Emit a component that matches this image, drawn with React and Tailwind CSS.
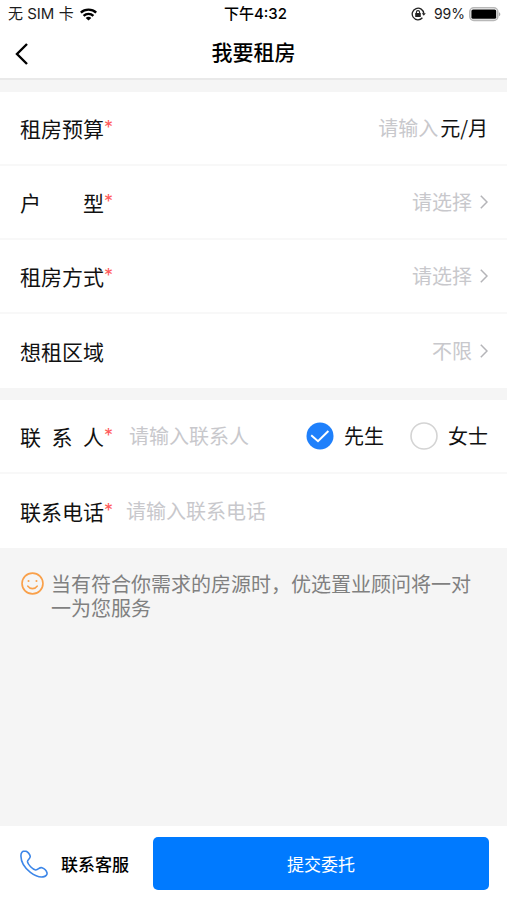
import React, { useState } from 'react';

const StatusBar = () => (
  <div className="relative flex h-7 items-center justify-between pr-1.5 pl-2 font-[Inter,'Noto_Sans_CJK_SC',sans-serif] text-[15px] leading-5 text-[#1c1c1c]">
    <div className="flex items-center gap-1.5">
      <span>无 SIM 卡</span>
      <svg width="17" height="13" viewBox="0 0 17 13" fill="none" stroke="#000" strokeWidth="2.4">
        <path d="M0.8 4.6C5 0.6 12 0.6 16.2 4.6" />
        <path d="M3.6 7.8C6.3 5.2 10.7 5.2 13.4 7.8" />
        <path d="M8.5 12.4L5.7 9.9C7.2 8.5 9.8 8.5 11.3 9.9Z" fill="#000" stroke="none" />
      </svg>
    </div>
    <span className="absolute left-1/2 -translate-x-1/2 pl-1 font-medium whitespace-nowrap text-black">下午4:32</span>
    <div className="flex items-center">
      <svg className="mr-2" width="15" height="14" viewBox="0 0 15 14" fill="none" stroke="#222" strokeWidth="1.3">
        <path d="M11.4 10.8A5.8 5.8 0 1 1 12.8 6.6" />
        <path d="M10.8 6.2h4l-2 2.6z" fill="#222" stroke="none" />
        <rect x="4.2" y="6" width="5.6" height="4" rx="0.5" fill="#222" stroke="none" />
        <path d="M5.4 6.4V5.2a1.6 1.6 0 0 1 3.2 0v1.2" strokeWidth="1.1" />
      </svg>
      <span className="mr-1 text-sm leading-5">99%</span>
      <svg width="32" height="15" viewBox="0 0 32 15">
        <rect x="0.8" y="0.8" width="28" height="12.6" rx="4" fill="#fff" stroke="#b8b8b8" strokeWidth="1.6" />
        <rect x="2.4" y="2.4" width="24.8" height="9.4" rx="1.6" fill="#000" />
        <path d="M30 5.2c1.8 0.7 1.8 3.3 0 4z" fill="#aaa" />
      </svg>
    </div>
  </div>
);

const Label = ({ htmlFor, text, required }) => (
  <label htmlFor={htmlFor} className="flex shrink-0 text-[21px] leading-7">
    <span className="flex w-[84px] justify-between">
      {text.split('').map((char) => (
        <span key={char}>{char}</span>
      ))}
    </span>
    {required && <span className="font-[Inter,sans-serif] text-lg leading-7 text-[#ff5a5a]">*</span>}
  </label>
);

const Row = ({ children }) => (
  <div className="flex h-[74px] items-center border-b-2 border-[#f8f8f8] pr-[19px] pl-5 last:border-b-0">
    {children}
  </div>
);

const SelectRow = ({ id, text, required, placeholder, options }) => (
  <Row>
    <Label htmlFor={id} text={text} required={required} />
    <select
      id={id}
      defaultValue=""
      className="ml-auto field-sizing-content appearance-none bg-transparent text-xl leading-[30px] text-[#c8c8cc] outline-none"
    >
      <option value="">{placeholder}</option>
      {options.map((option) => (
        <option key={option} value={option}>
          {option}
        </option>
      ))}
    </select>
    <svg className="ml-2 shrink-0" width="8" height="14" viewBox="0 0 8 14" fill="none" stroke="#b4b4b8" strokeWidth="1.5">
      <path d="M0.8 0.8L7 7L0.8 13.2" />
    </svg>
  </Row>
);

const GenderRadio = ({ value, checked, onChange, children }) => (
  <label className="relative flex shrink-0 items-center gap-2.5 text-xl leading-[30px]">
    <input
      type="radio"
      name="gender"
      value={value}
      checked={checked}
      onChange={() => onChange(value)}
      className="sr-only"
    />
    <svg width="28" height="28" viewBox="0 0 28 28" fill="none">
      {checked ? (
        <>
          <circle cx="14" cy="14" r="13.5" fill="#1f80fb" />
          <path d="M5.2 13.2L12 19.2L22.4 9" stroke="#fff" strokeWidth="2" />
        </>
      ) : (
        <circle cx="14" cy="14" r="13" fill="#fff" stroke="#d4d4d4" strokeWidth="1.6" />
      )}
    </svg>
    {children}
  </label>
);

const App = () => {
  const [gender, setGender] = useState('male');

  return (
    <form
      onSubmit={(e) => e.preventDefault()}
      className="flex min-h-screen flex-col bg-[#f5f5f5] font-['Noto_Sans_CJK_SC',sans-serif] text-[#111]"
    >
      <header className="border-b-2 border-[#e9e9e9] bg-white">
        <StatusBar />
        <div className="grid h-[50px] grid-cols-[1fr_auto_1fr] items-center px-[15px]">
          <button type="button" aria-label="返回" className="justify-self-start pt-0.5">
            <svg width="13" height="22" viewBox="0 0 13 22" fill="none" stroke="#000" strokeWidth="2.4">
              <path d="M12 1L2 11L12 21" />
            </svg>
          </button>
          <h1 className="pb-1 text-[21px] leading-7 font-medium text-black">我要租房</h1>
        </div>
      </header>

      {/* Requirements */}
      <section className="mt-3 bg-white">
        <Row>
          <Label htmlFor="budget" text="租房预算" required />
          <input
            id="budget"
            type="text"
            placeholder="请输入"
            className="min-w-0 flex-1 text-right text-xl leading-[30px] outline-none placeholder:text-[#c8c8cc]"
          />
          <label htmlFor="budget" className="ml-0.5 text-xl leading-[30px]">
            元/月
          </label>
        </Row>
        <SelectRow id="layout" text="户型" required placeholder="请选择" options={['一室', '两室', '三室']} />
        <SelectRow id="mode" text="租房方式" required placeholder="请选择" options={['整租', '合租']} />
        <SelectRow id="area" text="想租区域" placeholder="不限" options={[]} />
      </section>

      {/* Contact */}
      <section className="mt-3 bg-white">
        <Row>
          <Label htmlFor="name" text="联系人" required />
          <input
            id="name"
            type="text"
            placeholder="请输入联系人"
            className="ml-4 min-w-0 flex-1 text-xl leading-[30px] outline-none placeholder:text-[#c8c8cc]"
          />
          <div className="flex gap-[26px]">
            <GenderRadio value="male" checked={gender === 'male'} onChange={setGender}>
              先生
            </GenderRadio>
            <GenderRadio value="female" checked={gender === 'female'} onChange={setGender}>
              女士
            </GenderRadio>
          </div>
        </Row>
        <Row>
          <Label htmlFor="phone" text="联系电话" required />
          <input
            id="phone"
            type="tel"
            placeholder="请输入联系电话"
            className="ml-[13px] min-w-0 flex-1 text-xl leading-[30px] outline-none placeholder:text-[#c8c8cc]"
          />
        </Row>
      </section>

      <div className="flex gap-[7px] pt-6 pr-5 pl-[21px] text-xl leading-6 text-[#808080]">
        <svg className="shrink-0" width="23" height="23" viewBox="0 0 22 22" fill="none" stroke="#f9a04a" strokeWidth="1.6">
          <circle cx="11" cy="11" r="10" />
          <path d="M6.5 13.5C8.5 16.6 13.5 16.6 15.5 13.5" strokeLinecap="round" />
          <circle cx="7.2" cy="8.6" r="1" fill="#f9a04a" stroke="none" />
          <circle cx="14.8" cy="8.6" r="1" fill="#f9a04a" stroke="none" />
        </svg>
        <p>当有符合你需求的房源时，优选置业顾问将一对一为您服务</p>
      </div>

      <footer className="mt-auto flex items-center bg-white pt-[11px] pr-[18px] pb-2.5 pl-5">
        <button type="button" className="flex shrink-0 items-center gap-[13px] text-[17px] leading-6 font-medium text-black">
          <svg width="28" height="28" viewBox="0 0 28 28" fill="none" stroke="#3c86e8" strokeWidth="1.6" strokeLinejoin="round">
            <path d="M5 1C2.4 1 0.9 3.2 0.9 6C1 11.6 5 18.2 10.4 22.4C14.6 25.6 19.4 27.4 23 26.9C25.8 26.5 27.4 24.6 27 22.8C26.5 20.9 24 18.4 22 17.7C19.2 16.8 18.4 20.2 15.6 20C12.6 19.4 8 14.6 7.5 11.9C7.2 9.6 10.6 8.8 10.2 6.2C9.9 4.2 7.4 1 5 1Z" />
          </svg>
          联系客服
        </button>
        <button type="submit" className="ml-6 h-[53px] flex-1 rounded-[5px] bg-[#007aff] text-[17px] leading-6 text-white">
          提交委托
        </button>
      </footer>
    </form>
  );
};

export default App;
